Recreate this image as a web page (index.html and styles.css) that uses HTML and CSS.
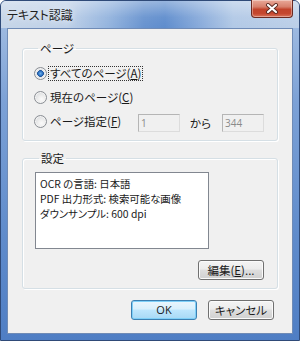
FILE: index.html
```html
<!DOCTYPE html>
<html lang="ja">
<head>
<meta charset="utf-8">
<title>テキスト認識</title>
<link rel="stylesheet" href="styles.css">
</head>
<body>
<div class="window">
  <div class="titlebar"><span class="title">テキスト認識</span></div>
  <div class="close">
    <svg width="14" height="11" viewBox="0 0 14 11">
      <path d="M3 2 L11 9 M11 2 L3 9" stroke="#5a2a22" stroke-width="4" stroke-linecap="round" fill="none"/>
      <path d="M3 2 L11 9 M11 2 L3 9" stroke="#ffffff" stroke-width="2.2" stroke-linecap="round" fill="none"/>
    </svg>
  </div>
  <div class="client">
    <fieldset class="group pages">
      <legend>ページ</legend>
      <div class="row"><span class="radio checked"></span><span class="label focus">すべてのページ(<u>A</u>)</span></div>
      <div class="row"><span class="radio"></span><span class="label">現在のページ(<u>C</u>)</span></div>
      <div class="row"><span class="radio"></span><span class="label">ページ指定(<u>F</u>)</span>
        <span class="range"><span class="edit">1</span><span class="from">から</span><span class="edit">344</span></span>
      </div>
    </fieldset>
    <fieldset class="group settings">
      <legend>設定</legend>
      <div class="listbox">
        <div>OCR の言語: 日本語</div>
        <div>PDF 出力形式: 検索可能な画像</div>
        <div>ダウンサンプル: 600 dpi</div>
      </div>
      <div class="btnrow"><span class="btn edit-btn">編集(<u>E</u>)...</span></div>
    </fieldset>
    <div class="footer">
      <span class="btn default">OK</span>
      <span class="btn">キャンセル</span>
    </div>
  </div>
</div>
</body>
</html>
```

FILE: styles.css
```css
* { box-sizing: border-box; }
html, body { margin: 0; padding: 0; }
body {
  width: 300px;
  height: 341px;
  overflow: hidden;
  background: #ffffff;
  font-family: "Noto Sans CJK JP", "Noto Sans", sans-serif;
  font-size: 11px;
  font-feature-settings: "palt";
  color: #1a1a1a;
}
.window {
  position: relative;
  width: 300px;
  height: 341px;
  border: 1px solid #2f4a78;
  border-radius: 6px 6px 0 0;
  padding: 0 6px 6px 6px;
  display: flex;
  flex-direction: column;
  background: linear-gradient(180deg, #a9c2e4 0%, #7ca1d6 30%, #5f8bcb 70%, #4f7ec4 100%);
}
.titlebar {
  height: 27px;
  margin: 0 -6px;
  padding-left: 6px;
  display: flex;
  align-items: center;
  border-radius: 5px 5px 0 0;
  background:
    linear-gradient(180deg, rgba(255,255,255,0.35) 0%, rgba(255,255,255,0.05) 60%, rgba(255,255,255,0) 100%),
    linear-gradient(90deg, #c6d5e8 0%, #bfd1e8 22%, #94b4de 36%, #6893cf 48%, #5f8dcd 55%, #86a9da 66%, #b2c9e6 78%, #bccfe8 100%);
}
.title {
  font-size: 12px;
  line-height: 16px;
  color: #1e1e1e;
  text-shadow: 0 0 6px rgba(255,255,255,0.9);
}
.close {
  position: absolute;
  top: -1px;
  right: 6px;
  width: 42px;
  height: 18px;
  border: 1px solid #6b2a22;
  border-top: none;
  border-radius: 0 0 4px 4px;
  display: flex;
  align-items: center;
  justify-content: center;
  background: linear-gradient(180deg, #e9a999 0%, #d7806c 40%, #c2432b 55%, #c5472f 80%, #d9745c 100%);
  box-shadow: inset 0 0 0 1px rgba(255,255,255,0.35);
}
.client {
  flex: 1;
  border: 1px solid #6f8bb6;
  background: #f0f0f0;
  display: flex;
  flex-direction: column;
}
.group {
  margin: 0 0 0 14px;
  width: 256px;
  padding: 0;
  min-width: 0;
  border: 1px solid #d5dfe5;
  border-radius: 3px;
  box-shadow: inset 1px 1px 0 #ffffff, 1px 1px 0 #ffffff;
}
.group legend {
  margin-left: 4px;
  padding: 0 2px;
  line-height: 16px;
  font-size: 11.5px;
  color: #1a1a1a;
}
.pages {
  margin-top: 11px;
  padding: 5px 13px 7px 11px;
}
.row {
  height: 24px;
  display: flex;
  align-items: center;
}
.radio {
  width: 13px;
  height: 13px;
  flex: none;
  border-radius: 50%;
  border: 1px solid #8a8e94;
  background: radial-gradient(circle at 60% 65%, #fbfbfb 0%, #eeeeee 35%, #cfd2d6 100%);
  box-shadow: inset 0 0 0 1px #f4f4f4;
}
.radio.checked {
  background: radial-gradient(circle at 50% 50%, #6eaee8 0%, #2f74c4 28%, #1b4f95 40%, #e4e7ea 44%, #d6d9dd 100%);
}
.label {
  margin-left: 1px;
  padding: 0 1px;
  border: 1px solid transparent;
  line-height: 13px;
  font-size: 11.5px;
}
.label.focus {
  border: 1px dotted #333333;
}
.range {
  margin-left: auto;
  margin-top: 4px;
  display: flex;
  align-items: center;
}
.edit {
  width: 42px;
  height: 18px;
  padding-left: 2px;
  border: 1px solid #b5b5b5;
  border-right-color: #dcdcdc;
  border-bottom-color: #dcdcdc;
  background: #f0f0f0;
  color: #8a8a8a;
  font-family: "Open Sans", "Noto Sans", sans-serif;
  font-size: 10px;
  line-height: 16px;
}
.from {
  margin: 0 11px 0 10px;
  font-size: 11.5px;
}
.settings {
  margin-top: 9px;
  padding: 6px 13px 8px 12px;
}
.listbox {
  width: 174px;
  height: 77px;
  border: 1px solid #828790;
  background: #ffffff;
  padding: 3px 4px 0;
  font-size: 10.4px;
  line-height: 15px;
}
.btnrow {
  margin-top: 11px;
  display: flex;
  justify-content: flex-end;
}
.btn {
  height: 20px;
  display: flex;
  align-items: center;
  justify-content: center;
  border: 1px solid #707070;
  border-radius: 3px;
  background: linear-gradient(180deg, #f4f4f4 0%, #ececec 45%, #dedede 50%, #d0d0d0 100%);
  box-shadow: inset 0 0 0 1px #fbfbfb;
  color: #1a1a1a;
  line-height: 14px;
  font-size: 11.5px;
}
.edit-btn {
  width: 66px;
}
.footer {
  margin-top: 11px;
  padding-right: 18px;
  display: flex;
  justify-content: flex-end;
  gap: 11px;
}
.footer .btn {
  width: 66px;
}
.btn.default {
  border-color: #3c7fb1;
  background: linear-gradient(180deg, #eaf6fd 0%, #d9f0fc 45%, #bee6fd 50%, #a7d9f5 100%);
  box-shadow: inset 0 0 0 1px #7fd0f8;
  font-family: "Open Sans", "Noto Sans", sans-serif;
  font-size: 11px;
}
```
